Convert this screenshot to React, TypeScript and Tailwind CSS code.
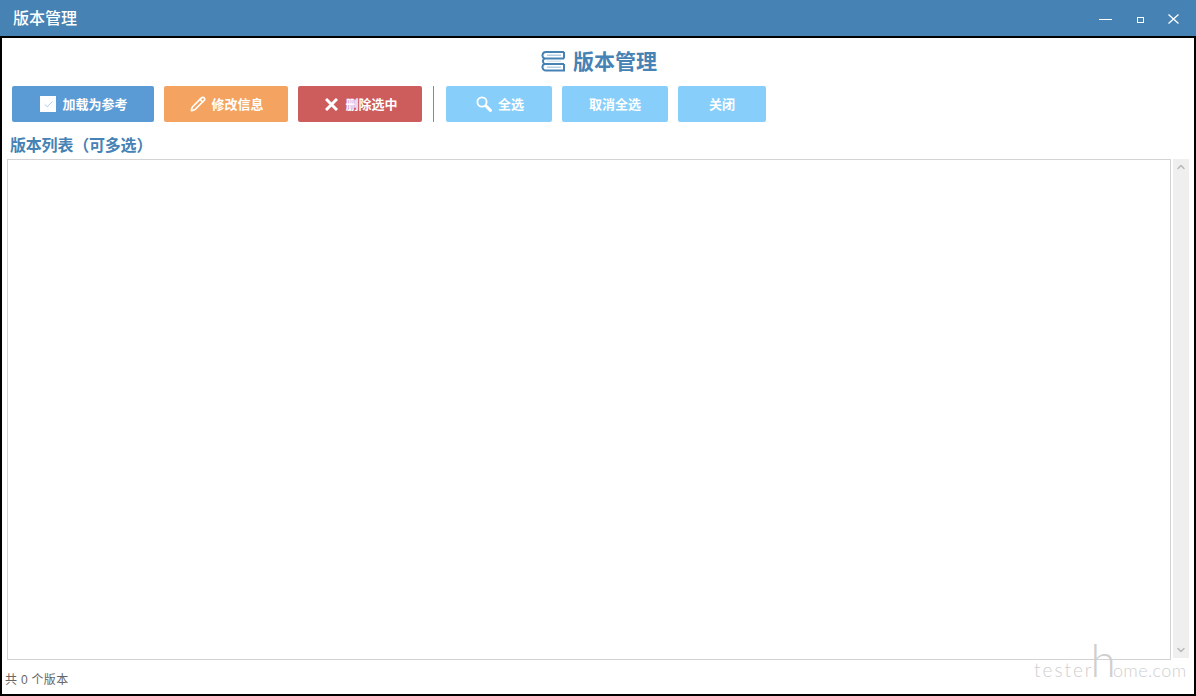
import { Check, Pencil, ChevronUp, ChevronDown } from 'lucide-react'

const font = { fontFamily: '"Liberation Sans", "Noto Sans CJK SC", sans-serif' }

function LogoIcon() {
    return (
        <svg width="24" height="22" viewBox="0 0 24 22" fill="none" stroke="#4682B4" strokeWidth="2">
            <path d="M23 2H5a3.4 3.4 0 0 0-1.5 6.5h19.5" />
            <path d="M23 2v6.5M3.5 8.5a3.2 3.2 0 0 0 0 5.5H23" />
            <path d="M3.5 14a3.4 3.4 0 0 0 1.5 6.5h18V14" />
            <path d="M6 5.2h14M6 17.2h14" strokeWidth="1.5" stroke="#b5cfe4" />
            <path d="M6 11.2h14" strokeWidth="1.5" stroke="#dce8f2" />
        </svg>
    )
}

function SearchIcon() {
    return (
        <svg width="16" height="16" viewBox="0 0 16 16" fill="none" stroke="white">
            <circle cx="6" cy="6" r="4.6" strokeWidth="1.8" />
            <path d="M9.8 9.8 14.4 14.4" strokeWidth="3" strokeLinecap="round" />
        </svg>
    )
}

function DeleteIcon() {
    return (
        <svg width="13" height="13" viewBox="0 0 13 13" stroke="white" strokeWidth="3">
            <path d="M1 1 12 12M12 1 1 12" />
        </svg>
    )
}

function CloseIcon() {
    return (
        <svg width="11" height="10" viewBox="0 0 11 10" stroke="white" strokeWidth="1.3">
            <path d="M.5 .5 10.5 9.5M10.5 .5 .5 9.5" />
        </svg>
    )
}

export default function App() {
    return (
        <div style={font} className="w-[1196px] h-[696px] flex flex-col bg-white overflow-hidden relative">
            {/* Title bar */}
            <div className="h-9 shrink-0 bg-[#4682B4] flex items-center justify-between pl-[13px] pr-[17px] text-white">
                <span className="text-base font-medium leading-none mt-[2px]">版本管理</span>
                <div className="flex items-center">
                    <div className="w-[13px] h-px bg-white mt-[2px]" />
                    <div className="ml-[25px] w-[7px] h-[6px] border border-white mt-[4px]" />
                    <div className="ml-[24px] mt-[1px]">
                        <CloseIcon />
                    </div>
                </div>
            </div>

            {/* Body */}
            <div className="flex-1 min-h-0 border-2 border-black flex flex-col">
                <div className="h-[48px] shrink-0 flex items-center justify-center gap-[8px] pl-[2px] pb-[2px] text-[#4682B4]">
                    <LogoIcon />
                    <span className="text-[21px] font-bold leading-none">版本管理</span>
                </div>

                <div className="flex items-center h-9 pl-[10px] shrink-0 text-white text-[13px] font-bold">
                    <button className="w-[142px] h-9 rounded-[2px] bg-[#5B9BD5] flex items-center justify-center gap-[6px] pl-[2px]">
                        <span className="w-4 h-4 bg-white flex items-center justify-center">
                            <Check size={11} strokeWidth={1.5} className="text-[#8ab4d8]" />
                        </span>
                        <span className="mt-[2px]">加载为参考</span>
                    </button>
                    <button className="ml-[10px] w-[124px] h-9 rounded-[2px] bg-[#F4A460] flex items-center justify-center gap-[5px] pl-[2px]">
                        <Pencil size={16} strokeWidth={2.4} />
                        <span className="mt-[2px]">修改信息</span>
                    </button>
                    <button className="ml-[10px] w-[124px] h-9 rounded-[2px] bg-[#CD5C5C] flex items-center justify-center gap-[7px] pl-[3px]">
                        <DeleteIcon />
                        <span className="mt-[2px]">删除选中</span>
                    </button>
                    <div className="ml-[11px] w-px h-9 bg-[#8a8a8a]" />
                    <button className="ml-3 w-[106px] h-9 rounded-[2px] bg-[#87CEFA] flex items-center justify-center gap-[6px] pl-[2px]">
                        <SearchIcon />
                        <span className="mt-[2px]">全选</span>
                    </button>
                    <button className="ml-[10px] w-[106px] h-9 rounded-[2px] bg-[#87CEFA] pt-[2px]">取消全选</button>
                    <button className="ml-[10px] w-[88px] h-9 rounded-[2px] bg-[#87CEFA] pt-[2px]">关闭</button>
                </div>

                <div className="h-[37px] shrink-0 pl-2 pt-[13px] text-[#4682B4] text-base font-bold leading-[22px] tracking-[-0.2px]">
                    版本列表（可多选）
                </div>

                <div className="flex-1 min-h-0 flex pl-[5px] pr-[5px] gap-[1px]">
                    <div className="flex-1 h-[501px] border border-[#d3d3d3] bg-white" />
                    <div className="w-[16px] h-[499px] ml-[1px] bg-[#efefef] flex flex-col items-center justify-between py-[2px] text-[#b8b8b8]">
                        <ChevronUp size={12} strokeWidth={3} />
                        <ChevronDown size={12} strokeWidth={3} />
                    </div>
                </div>

                <div className="h-[34px] shrink-0 pl-[3px] pt-[11px] text-xs leading-[18px] text-[#666666] tracking-[0.3px]">共 0 个版本</div>
            </div>

            {/* Watermark */}
            <div className="absolute left-[1034px] top-[634px] flex items-baseline text-[#cfcfcf] pointer-events-none whitespace-nowrap" style={{ fontFamily: 'Lato, sans-serif', fontWeight: 300 }}>
                <span className="text-[19px] tracking-[2px]">tester</span>
                <span className="text-[46px] leading-[52px] -mx-[3px]">h</span>
                <span className="text-[18px] tracking-[0.4px]">ome.com</span>
            </div>
        </div>
    )
}
